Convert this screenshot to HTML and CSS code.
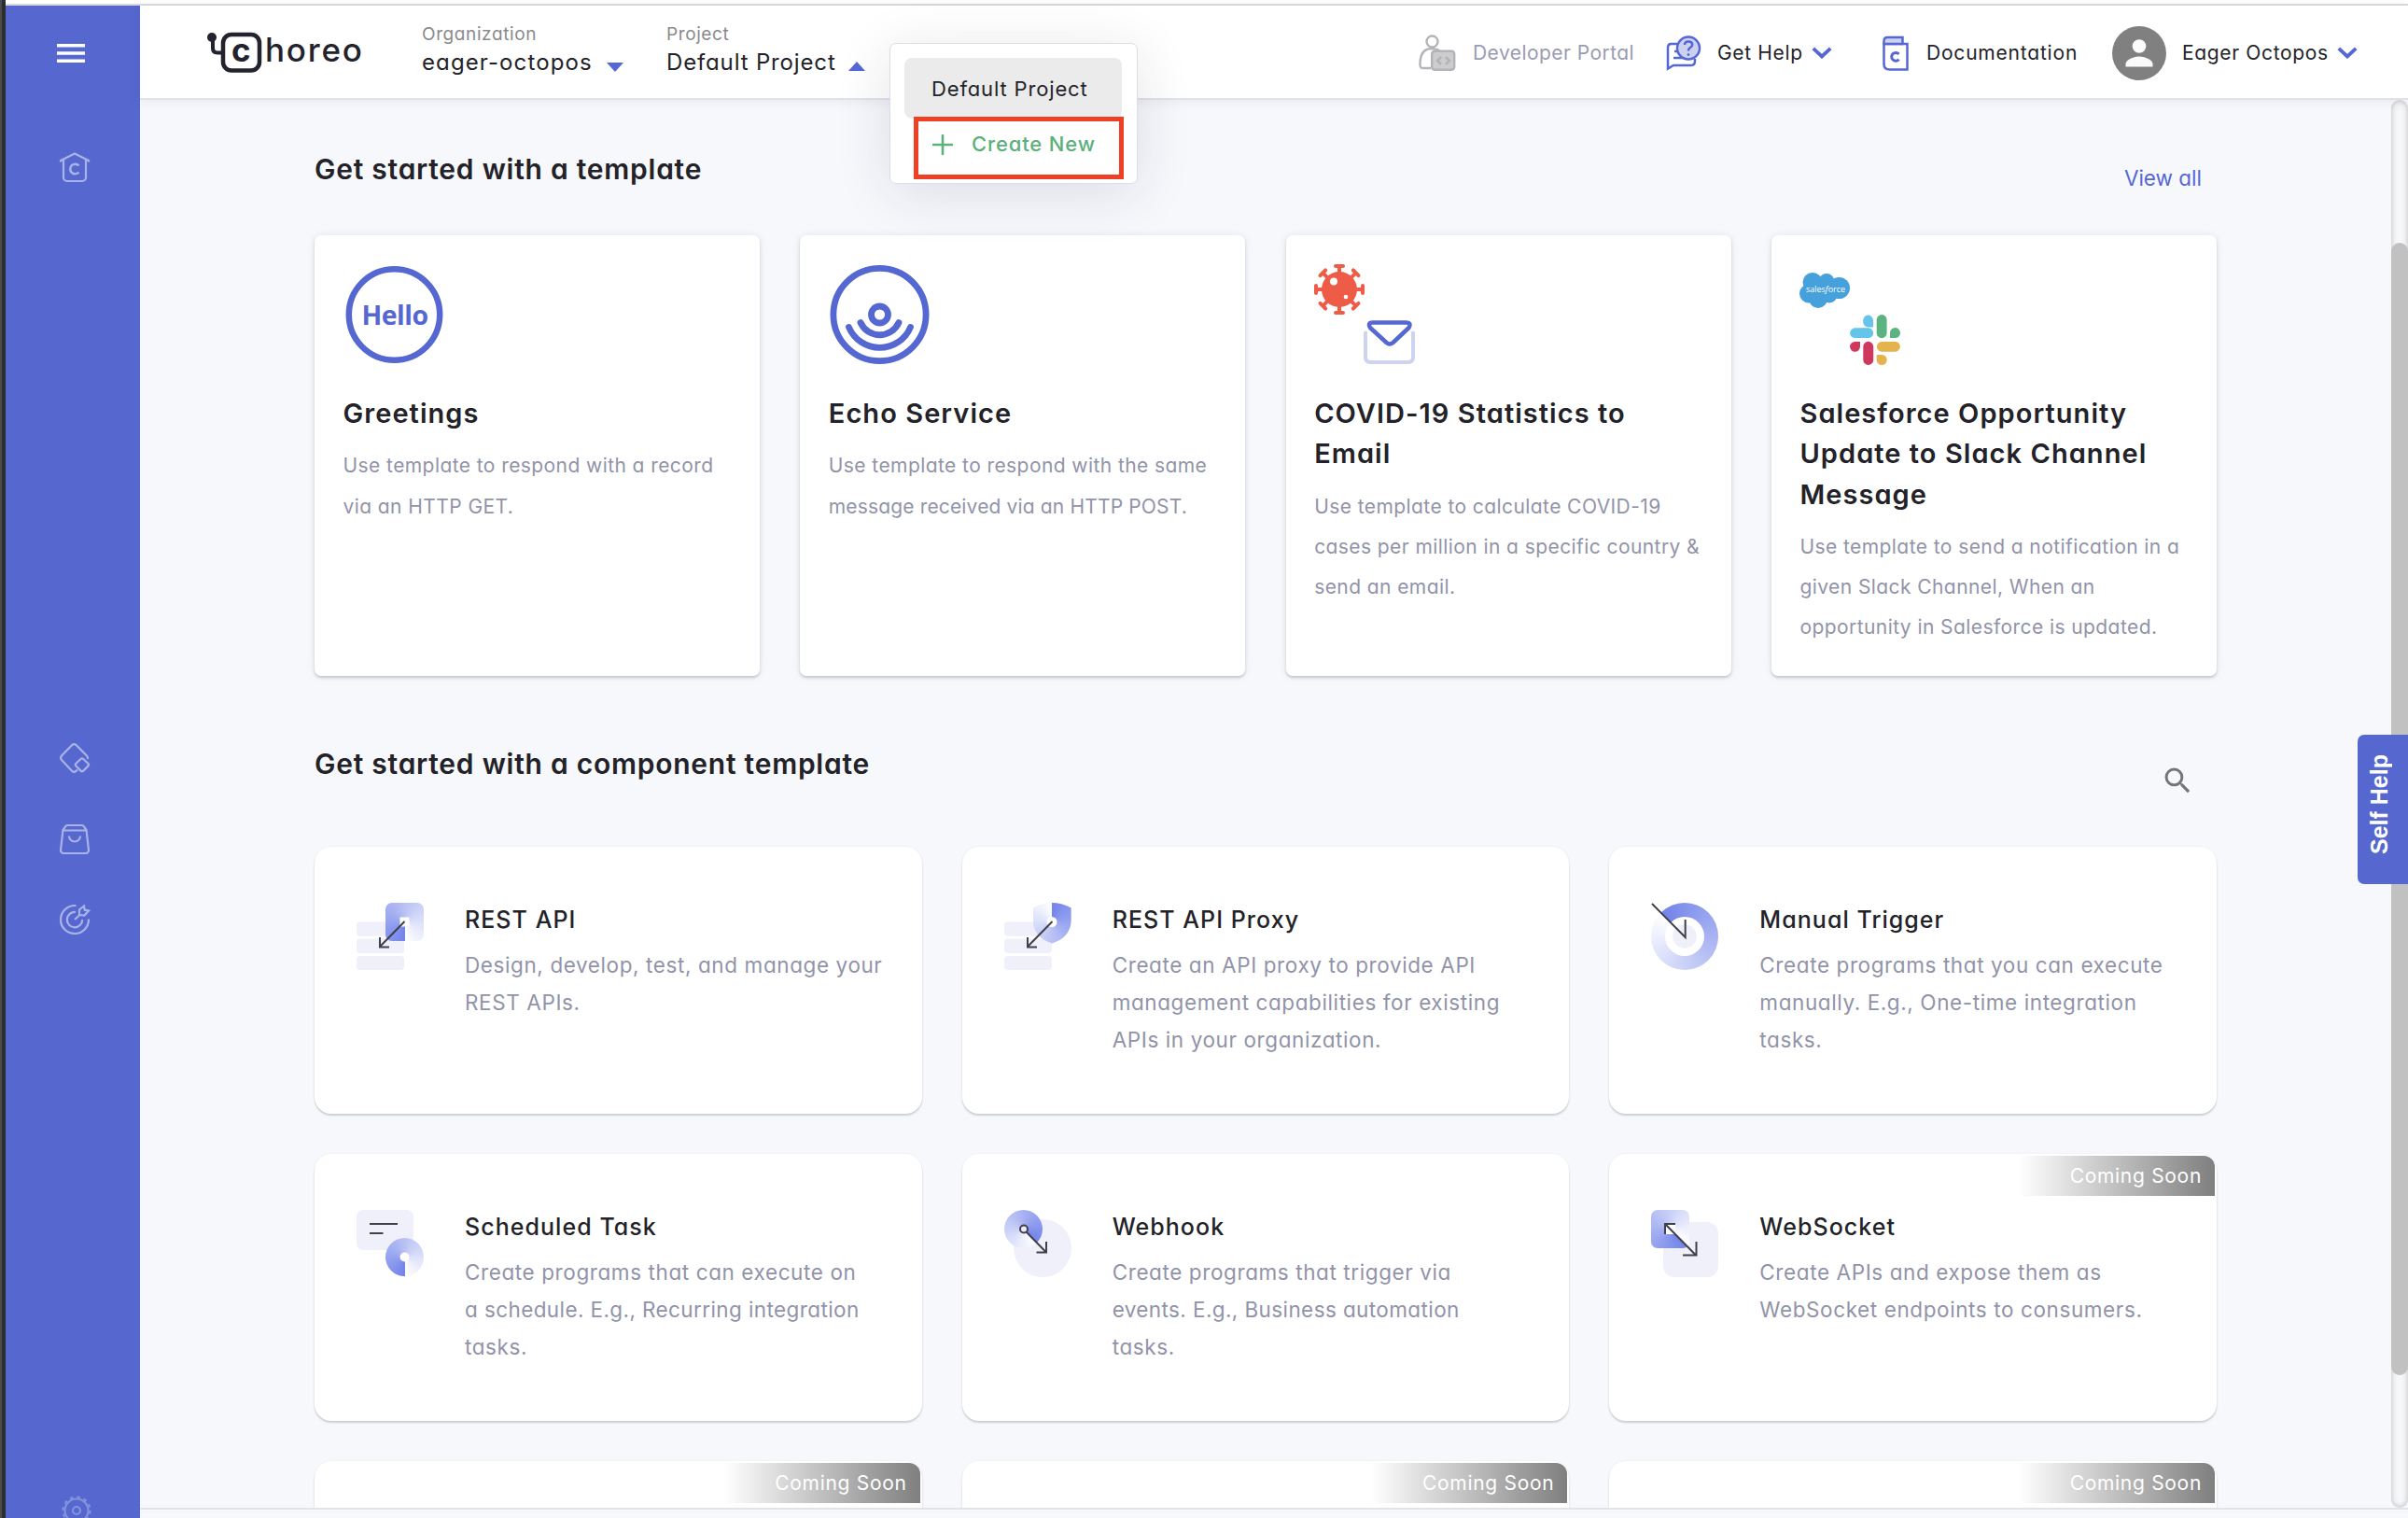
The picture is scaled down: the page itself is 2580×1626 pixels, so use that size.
FILE: index.html
```html
<!DOCTYPE html>
<html lang="en">
<head>
<meta charset="utf-8">
<title>Choreo Console</title>
<link rel="stylesheet" href="styles.css">
</head>
<body>
<div class="window">
  <div class="window-edge"></div>
  <div class="window-body">
    <div class="top-strip"></div>
    <div class="app">
      <nav class="sidebar">
        <svg class="menu-btn" width="30" height="20" viewBox="0 0 30 20" fill="#fff"><path d="M0 0h30v3.6H0zM0 8.2h30v3.6H0zM0 16.4h30V20H0z"/></svg>
        <svg class="side-icon side-home" viewBox="0 0 32 32"><path d="M1 10.5V9L16 1.500 31 9v1.500M4 8v19a4 4 0 0 0 4 4h16a4 4 0 0 0 4-4V8"/><path class="thick" d="M20.500 14.500a5.300 5.300 0 1 0 0 7"/></svg>
        <div class="side-group">
          <svg class="side-icon" viewBox="0 0 32 32"><path d="M19 28.500l-1.500 1.300a3.500 3.500 0 0 1-4.500 0L2 18a3.500 3.500 0 0 1 0-4.500L13 2.200a3.500 3.500 0 0 1 4.800 0L29 13.500c1 1 1.200 2 1 3.500"/><path d="M22.500 17l-5 4.800a2 2 0 0 0 0 2.800l5 5a2 2 0 0 0 2.800 0l5-5a2 2 0 0 0 0-2.800l-5-4.800a2 2 0 0 0-2.800 0z"/></svg>
          <svg class="side-icon" viewBox="0 0 32 32"><path d="M3.500 6L6 2.500A3 3 0 0 1 8.300 1h15.400A3 3 0 0 1 26 2.500L28.500 6 31 27.500A3.200 3.200 0 0 1 27.800 31H4.200A3.200 3.200 0 0 1 1 27.500zM3.500 6.500h25"/><path d="M10 12.500a6 6 0 0 0 12 0"/></svg>
          <svg class="side-icon" viewBox="0 0 32 32"><path d="M17.500 1.100A15 15 0 1 0 31 15.500"/><path d="M17 8a8.200 8.200 0 1 0 7.200 8"/><path d="M16 16l6-5.500M21 11V5.500L26 1.500l.8 4.200L31 6.500l-4.500 5z"/></svg>
        </div>
        <svg class="side-icon side-gear" viewBox="0 0 32 32"><circle cx="16" cy="16" r="12.500"/><circle cx="16" cy="16" r="4"/><circle cx="16" cy="16" r="14.500" stroke-dasharray="3.500 4.090"/></svg>
      </nav>

      <div class="main">
        <header class="header">
          <svg class="logo" width="170" height="46" viewBox="0 0 170 46">
            <circle cx="6" cy="7" r="5" fill="#23232e"/>
            <path d="M7 8v10.500q0 5 5 5h6" fill="none" stroke="#23232e" stroke-width="4"/>
            <rect x="18" y="4" width="39" height="38.500" rx="9" fill="#fff" stroke="#23232e" stroke-width="4.500"/>
            <text x="27" y="32.500" class="logo-c">c</text>
            <text x="63" y="32.500" class="logo-text">horeo</text>
          </svg>
          <div class="picker picker-org">
            <span class="picker-label">Organization</span>
            <span class="picker-value picker-value-org">eager-octopos <svg class="caret" width="18" height="10" viewBox="0 0 18 10"><path d="M0 0h18L9 10z" fill="#5567d5"/></svg></span>
          </div>
          <div class="picker picker-project">
            <span class="picker-label">Project</span>
            <span class="picker-value">Default Project <svg class="caret caret-up" width="18" height="10" viewBox="0 0 18 10"><path d="M0 10h18L9 0z" fill="#5567d5"/></svg></span>
            <div class="dropdown">
              <div class="dropdown-item selected">Default Project</div>
              <div class="dropdown-item create">
                <svg width="22" height="22" viewBox="0 0 22 22"><path d="M11 1v20M1 11h20" stroke="#5cb07c" stroke-width="2.600" stroke-linecap="round"/></svg>
                <span>Create New</span>
              </div>
            </div>
          </div>

          <div class="actions">
            <div class="action portal">
              <svg width="40" height="40" viewBox="0 0 40 40" fill="none" stroke="#b4b4b8" stroke-width="2.400"><circle cx="14.500" cy="7.500" r="6"/><path d="M13 36H4.500C2 36 1.500 35 1.500 32 1.500 22 5 15.500 13 15c4 0 7 .8 9.500 2.500"/><rect x="14.200" y="17.700" width="24" height="20" rx="3" fill="#cdcdd0"/><path d="M24 24l-4 4 4 4M29 24l4 4-4 4" stroke-width="2.600"/></svg>
              <span>Developer Portal</span>
            </div>
            <div class="action help">
              <svg width="38" height="40" viewBox="0 0 38 40" fill="none" stroke="#5567d5" stroke-width="2.500"><path d="M12 10H5.500Q2 10 2 14v22.500L8 33h19q4 0 4-5v-2M9 18h4M8 25h11"/><circle cx="24" cy="14.500" r="12" fill="#ccd1f2"/><path d="M20 11q0-3.500 4-3.500t4.200 3.200q0 2-2.200 3.300t-2 3.500" stroke-width="2.500"/><circle cx="24" cy="21.500" r="1" fill="#5567d5" stroke-width="1"/></svg>
              <span>Get Help</span>
              <svg class="chev" width="22" height="13" viewBox="0 0 22 13"><path d="M1.800 1.800L11 10.500l9.200-8.700" fill="none" stroke="#5567d5" stroke-width="3.800"/></svg>
            </div>
            <div class="action docs">
              <svg width="28" height="38" viewBox="0 0 28 38" fill="none" stroke="#5567d5" stroke-width="2.500"><path d="M1.500 9V30.500q0 6 6 6H26.500V9z"/><path d="M1.500 9V6q0-4 4-4h16v7z" fill="#ccd1f2"/><path d="M17.500 20a4.400 4.400 0 1 0 0 5.600" stroke-width="3"/></svg>
              <span>Documentation</span>
            </div>
            <div class="action user">
              <svg width="58" height="58" viewBox="0 0 58 58"><circle cx="29" cy="29" r="29" fill="#808080"/><circle cx="29" cy="21.500" r="7.300" fill="#fafafa"/><path d="M14.500 43.500v-3c0-5 9.500-8 14.500-8s14.500 3 14.500 8v3z" fill="#fafafa"/></svg>
              <span>Eager Octopos</span>
              <svg class="chev" width="22" height="13" viewBox="0 0 22 13"><path d="M1.800 1.800L11 10.500l9.200-8.700" fill="none" stroke="#5567d5" stroke-width="3.800"/></svg>
            </div>
          </div>
        </header>

        <div class="scroll-area">
          <main class="content">
            <div class="section-head">
              <h2>Get started with a template</h2>
              <a class="view-all">View all</a>
            </div>
            <div class="templates">
              <article class="template">
                <svg width="108" height="108" viewBox="0 0 108 108"><circle cx="54.500" cy="54" r="48.700" fill="none" stroke="#5567d0" stroke-width="6.500"/><text x="55" y="65" text-anchor="middle" class="hello">Hello</text></svg>
                <h3>Greetings</h3>
                <p>Use template to respond with a record<br>via an HTTP GET.</p>
              </article>
              <article class="template">
                <svg width="108" height="108" viewBox="0 0 108 108" fill="none" stroke="#5567d0" stroke-width="6.800" stroke-linecap="round"><circle cx="54.500" cy="54" r="49.600"/><circle cx="54.500" cy="54" r="9"/><path d="M34 62.500a22.500 22.500 0 0 0 41 0"/><path d="M21.500 67.500a35.800 35.800 0 0 0 66 0"/></svg>
                <h3>Echo Service</h3>
                <p>Use template to respond with the same<br><span class="tight">message received via an HTTP POST.</span></p>
              </article>
              <article class="template">
                <svg width="108" height="108" viewBox="0 0 108 108">
                  <g stroke="#ee5c48" stroke-width="4" stroke-linecap="round" fill="none"><path id="spike" d="M27 14V2M23 2h8"/><use href="#spike" transform="rotate(45 27 27)"/><use href="#spike" transform="rotate(90 27 27)"/><use href="#spike" transform="rotate(135 27 27)"/><use href="#spike" transform="rotate(180 27 27)"/><use href="#spike" transform="rotate(225 27 27)"/><use href="#spike" transform="rotate(270 27 27)"/><use href="#spike" transform="rotate(315 27 27)"/></g>
                  <circle cx="27" cy="27" r="19" fill="#ee5c48"/><circle cx="21" cy="18.500" r="4" fill="#fff"/><circle cx="34" cy="35" r="2.300" fill="#fff"/>
                  <path d="M56.500 74v26q0 5.500 5.500 5.500h40q5.500 0 5.500-5.500V74" transform="translate(-1.500 -.5)" fill="none" stroke="#ced3f0" stroke-width="4" stroke-linecap="round"/>
                  <path d="M62.500 62.500h36q6 0 3 5.500L84.500 84q-3.500 3-7 0L60 68q-3-5.500 2.500-5.500z" fill="none" stroke="#5567d0" stroke-width="4.500"/>
                </svg>
                <h3>COVID-19 Statistics to<br>Email</h3>
                <p>Use template to calculate COVID-19<br>cases per million in a specific country &amp;<br>send an email.</p>
              </article>
              <article class="template">
                <svg width="108" height="108" viewBox="0 0 108 108">
                  <g fill="#45a0dc"><circle cx="14" cy="19.500" r="10.500"/><circle cx="29" cy="18.500" r="8.500"/><circle cx="42.500" cy="25.500" r="11.500"/><circle cx="10" cy="31.500" r="10"/><circle cx="20" cy="37" r="10"/><circle cx="32" cy="33" r="8.500"/><path d="M8 18h34v18H8z"/></g>
                  <text x="28" y="30" text-anchor="middle" class="sf">sales<tspan font-style="italic">f</tspan>orce</text>
                  <g transform="translate(54 54)">
                    <path fill="#65c4ea" d="M25 13.500h-5.500A5.500 6.500 0 1 1 25 5.700zM5.500 14.300h14.300a5.400 5.400 0 0 1 0 10.800H5.500a5.400 5.400 0 0 1 0-10.800z"/>
                    <path fill="#5bb381" d="M28.700 5.500a5.400 5.400 0 0 1 10.900 0v14.200a5.400 5.400 0 0 1-10.900 0zM43 25.100v-5.400a5.500 5.500 0 1 1 5.500 5.400z"/>
                    <path fill="#e4b34d" d="M34.200 28.900h14.300a5.400 5.400 0 0 1 0 10.800H34.200a5.400 5.400 0 0 1 0-10.800zM28.700 43h5.500a5.500 5.500 0 1 1-5.500 5.500z"/>
                    <path fill="#cf375d" d="M14.300 34.300a5.400 5.400 0 0 1 10.900 0v14.200a5.400 5.400 0 0 1-10.900 0zM0 34.300a5.500 5.500 0 0 1 5.500-5.400H11v5.400a5.500 5.500 0 0 1-11 0z"/>
                  </g>
                </svg>
                <h3>Salesforce Opportunity<br>Update to Slack Channel<br>Message</h3>
                <p>Use template to send a notification in a<br>given Slack Channel, When an<br>opportunity in Salesforce is updated.</p>
              </article>
            </div>

            <div class="section-head section-head-components">
              <h2>Get started with a component template</h2>
              <svg class="search" width="36.500" height="36.500" viewBox="0 0 24 24"><path fill="#757575" d="M15.500 14h-.79l-.28-.27A6.471 6.471 0 0 0 16 9.500 6.500 6.500 0 1 0 9.500 16c1.610 0 3.090-.59 4.230-1.570l.27.28v.79l5 4.990L20.490 19l-4.990-5zm-6 0C7.010 14 5 11.990 5 9.500S7.010 5 9.500 5 14 7.010 14 9.500 11.990 14 9.500 14z"/></svg>
            </div>
            <div class="components">
              <article class="component">
                <div class="pic">
                  <svg viewBox="0 0 72 72" fill="#f0f0fb"><rect y="20.300" width="51" height="15.500" rx="4"/><rect y="38.600" width="51" height="15.500" rx="4"/><rect y="57" width="51" height="15" rx="4"/></svg>
                  <i class="conic conic-square"></i>
                  <svg viewBox="0 0 72 72"><rect x="46.500" y="15.500" width="10" height="10" fill="#fff"/><path class="arrow" d="M51.500 20L25 47M25 37v10.500h10"/></svg>
                </div>
                <div class="text"><h4>REST API</h4><p>Design, develop, test, and manage your<br>REST APIs.</p></div>
              </article>
              <article class="component">
                <div class="pic">
                  <svg viewBox="0 0 72 72" fill="#f0f0fb"><rect y="20.300" width="51" height="15.500" rx="4"/><rect y="38.600" width="51" height="15.500" rx="4"/><rect y="57" width="51" height="15" rx="4"/></svg>
                  <i class="conic conic-shield"></i>
                  <svg viewBox="0 0 72 72"><circle cx="51" cy="20.500" r="5.500" fill="#fff"/><path class="arrow" d="M51.500 20L25 47M25 37v10.500h10"/></svg>
                </div>
                <div class="text"><h4>REST API Proxy</h4><p>Create an API proxy to provide API<br>management capabilities for existing<br>APIs in your organization.</p></div>
              </article>
              <article class="component">
                <div class="pic">
                  <i class="conic conic-ring"></i>
                  <svg viewBox="0 0 72 72"><circle cx="36" cy="36" r="21" fill="#fff"/><circle cx="36" cy="36" r="12.800" fill="#f0f0fb"/><path class="arrow" d="M1 1l35.700 36V18"/></svg>
                </div>
                <div class="text"><h4>Manual Trigger</h4><p>Create programs that you can execute<br>manually. E.g., One-time integration<br>tasks.</p></div>
              </article>
              <article class="component">
                <div class="pic">
                  <svg viewBox="0 0 72 72"><rect width="61" height="43" rx="7" fill="#f0f0fb"/><path class="arrow" d="M14 15h30M14 25h14.500"/></svg>
                  <i class="conic conic-clock"></i>
                  <svg viewBox="0 0 72 72"><circle cx="51.500" cy="50.500" r="5" fill="#fff"/></svg>
                </div>
                <div class="text"><h4>Scheduled Task</h4><p>Create programs that can execute on<br><span class="tight">a schedule. E.g., Recurring integration</span><br>tasks.</p></div>
              </article>
              <article class="component">
                <div class="pic">
                  <svg viewBox="0 0 72 72"><circle cx="41" cy="41" r="31" fill="#f0f0fb"/></svg>
                  <i class="conic conic-hook"></i>
                  <svg viewBox="0 0 72 72"><circle cx="21" cy="20.500" r="4" fill="#e9ebfa" stroke="#40404b" stroke-width="2"/><path class="arrow" d="M23.500 23.500L45 45.500M45 34v11.500H34.500"/></svg>
                </div>
                <div class="text"><h4>Webhook</h4><p>Create programs that trigger via<br><span class="tight">events. E.g., Business automation</span><br>tasks.</p></div>
              </article>
              <article class="component">
                <div class="pic">
                  <svg viewBox="0 0 72 72"><rect x="13" y="13" width="59" height="59" rx="12" fill="#f0f0fb"/></svg>
                  <i class="conic conic-socket"></i>
                  <svg viewBox="0 0 72 72"><rect x="16" y="16" width="10" height="10" fill="#fff"/><path class="arrow" d="M15 15l33 33.500M15 26V15h11M48.500 34v14.500H34"/></svg>
                </div>
                <div class="text"><h4>WebSocket</h4><p>Create APIs and expose them as<br>WebSocket endpoints to consumers.</p></div>
                <span class="soon">Coming Soon</span>
              </article>
              <article class="component"><span class="soon">Coming Soon</span></article>
              <article class="component"><span class="soon">Coming Soon</span></article>
              <article class="component"><span class="soon">Coming Soon</span></article>
            </div>
          </main>
          <div class="scrollbar"><div class="thumb"></div></div>
        </div>
      </div>
    </div>
  </div>
  <div class="self-help"><span>Self Help</span></div>
</div>
</body>
</html>
```
FILE: styles.css
```css
* { box-sizing: border-box; }

body {
  margin: 0;
  font-family: Inter, "Liberation Sans", sans-serif;
  font-feature-settings: "cv11";
  color: #222228;
  background: #f7f8fc;
  white-space: nowrap;
}

h2, h3, h4, p { margin: 0; }

.window {
  position: relative;
  display: flex;
  width: 2580px;
  height: 1626px;
  overflow: hidden;
}

.window-edge {
  width: 6px;
  background: linear-gradient(to right, #4a4b4b 2px, #2c2d2d 2px);
}

.window-body {
  flex: 1;
  display: flex;
  flex-direction: column;
}

.top-strip {
  height: 6px;
  background: #fff;
  border-bottom: 2px solid #dadada;
}

.app { flex: 1; display: flex; min-height: 0; }

/* Sidebar */
.sidebar {
  width: 144px;
  display: flex;
  flex-direction: column;
  align-items: flex-start;
  padding-top: 41px;
  background: #5668cf;
}

.menu-btn { margin-left: 55px; flex: none; }

.side-icon {
  flex: none;
  width: 32px;
  height: 32px;
  margin-left: 58px;
  fill: none;
  stroke: #aab3e7;
  stroke-width: 2.2;
  overflow: visible;
}

.side-icon .thick { stroke-width: 2.6; }
.side-home { margin-top: 96px; }

.side-group {
  display: flex;
  flex-direction: column;
  gap: 54.5px;
  margin-top: 601px;
}

.side-gear { margin: 601px 0 0 60px; stroke: #8592dd; }

/* Header */
.main { flex: 1; display: flex; flex-direction: column; }

.header {
  position: relative;
  z-index: 2;
  display: flex;
  align-items: flex-start;
  height: 101px;
  padding-left: 71px;
  background: #fff;
  border-bottom: 2px solid #e0e1ea;
  box-shadow: 0 2px 12px rgba(60, 60, 90, .08);
}

.logo { margin-top: 27px; }
.logo-text, .logo-c { fill: #23232e; font-size: 35px; font-weight: 500; }
.logo-text { letter-spacing: 1.8px; }
.logo-c { font-weight: 700; }

.picker {
  position: relative;
  display: flex;
  flex-direction: column;
  margin-top: 15px;
}

.picker-org { width: 262px; margin-left: 61px; }
.picker-label { font-size: 19px; line-height: 31px; letter-spacing: .6px; color: #8a8a8d; }
.picker-value { display: flex; align-items: center; font-size: 24px; line-height: 30px; letter-spacing: .85px; }
.picker-value-org { letter-spacing: 1.1px; }
.caret { margin: 9px 0 0 15px; }
.caret-up { margin: 7px 0 0 13px; }

.dropdown {
  position: absolute;
  left: 239px;
  top: 25px;
  width: 266px;
  height: 151px;
  padding: 15px;
  background: #fff;
  border: 1px solid #dcdde6;
  border-radius: 7px;
  box-shadow: 0 10px 60px rgba(30, 30, 60, .12);
}

.dropdown-item { font-size: 22px; letter-spacing: .85px; }

.selected {
  width: 233px;
  height: 65px;
  line-height: 67px;
  padding-left: 29px;
  border-radius: 8px;
  background: #ebebeb;
}

.create {
  position: relative;
  display: flex;
  gap: 20px;
  width: 225px;
  height: 67px;
  margin: -2px 0 0 10px;
  padding: 14px 0 0 15px;
  color: #5cb07c;
  font-weight: 500;
  border: 5px solid #ee4024;
}
.create span { line-height: 20px; }

.actions {
  display: grid;
  grid-template-columns: 265px 232px 246px 265px;
  height: 101px;
  margin-left: auto;
  padding-right: 52px;
}
.action { display: flex; align-items: center; gap: 17px; font-size: 21px; letter-spacing: .65px; }
.portal { gap: 18px; letter-spacing: .45px; color: #9a9bb0; }
.docs { gap: 19px; letter-spacing: .8px; }
.chev { margin-left: -8px; }

/* Content */
.scroll-area {
  flex: none;
  display: flex;
  height: 1510px;
  overflow: hidden;
  border-bottom: 2px solid #e2e4ec;
}

.content { width: 2412px; padding: 0 187px; }

.section-head {
  display: flex;
  justify-content: space-between;
  align-items: flex-start;
  height: 145px;
  padding-top: 54px;
}

.section-head h2 { font-size: 30px; font-weight: 600; line-height: 40px; letter-spacing: .75px; }
.view-all { margin: 10px 16px 0 0; font-size: 22.5px; line-height: 40px; color: #5567d5; }
.section-head-components { height: 183px; padding-top: 74px; }
.search { margin: 20px 24px 0 0; }

.templates {
  display: grid;
  grid-template-columns: repeat(4, minmax(0, 1fr));
  gap: 43.3px;
}

.template {
  height: 472px;
  padding: 31px 30px;
  background: #fff;
  border-radius: 7px;
  box-shadow: 0 2px 3px rgba(40, 40, 60, .22), 0 0 10px rgba(40, 40, 60, .08);
}

.template svg { display: block; margin-left: .5px; }
.hello { font-family: "Open Sans", sans-serif; font-size: 28.5px; font-weight: 700; letter-spacing: -.5px; fill: #5567d0; }
.sf { font-family: "Open Sans", sans-serif; font-size: 9px; fill: #fff; }
.template h3 { margin-top: 30px; padding-left: .5px; font-size: 29px; font-weight: 600; line-height: 43.3px; letter-spacing: 1.05px; }
.template p { margin-top: 13px; padding-left: .5px; font-size: 21px; line-height: 43.3px; letter-spacing: .42px; color: #9193a8; }
.template .tight { letter-spacing: .15px; }

.components {
  display: grid;
  grid-template-columns: repeat(3, minmax(0, 1fr));
  gap: 43px;
}

.component {
  position: relative;
  display: flex;
  gap: 44px;
  height: 286px;
  padding: 58px 45px;
  background: #fff;
  border-radius: 18px;
  box-shadow: 0 2px 2px rgba(40, 50, 70, .2), 0 0 2px rgba(40, 50, 70, .08);
}

.component h4 { font-size: 25px; font-weight: 500; line-height: 40px; letter-spacing: 1.05px; }
.component p { margin-top: 9px; font-size: 22.5px; line-height: 40px; letter-spacing: .6px; color: #9193a8; }
.component .tight { letter-spacing: .4px; }

.pic { position: relative; flex: none; width: 72px; height: 72px; margin-top: 2px; }
.pic svg { position: absolute; inset: 0; overflow: visible; }
.arrow { fill: none; stroke: #40404b; stroke-width: 2; }

.conic { position: absolute; width: 41px; height: 41px; }
.conic-square { right: 0; top: 0; border-radius: 7px; background: conic-gradient(from 180deg, #7384ea, #fff); }
.conic-shield {
  right: 0;
  top: 0;
  height: 44px;
  background: conic-gradient(from 0deg at 20.5px 20px, #7384ea, #fff);
  clip-path: path("M20.5 0C27 0 34 1.5 41 5.5V19C41 31 33 39.5 20.5 43.5C8 39.5 0 31 0 19V5.5C7 1.5 14 0 20.5 0Z");
}
.conic-ring { inset: 0; width: 72px; height: 72px; border-radius: 50%; background: conic-gradient(from 315deg, #7384ea, #fff); }
.conic-clock { right: 0; top: 30px; border-radius: 50%; background: conic-gradient(from 180deg, #7384ea, #fff); }
.conic-hook { left: 0; top: 0; border-radius: 50%; background: conic-gradient(from 135deg, #fff, #7384ea); }
.conic-socket { left: 0; top: 0; border-radius: 7px; background: conic-gradient(from 135deg, #7384ea, #fff); }

.soon {
  position: absolute;
  top: 2px;
  right: 2px;
  width: 210px;
  height: 43px;
  padding-right: 14px;
  border-top-right-radius: 12px;
  background: linear-gradient(to right, rgba(127, 127, 127, 0), #7f7f7f);
  color: #fff;
  font-size: 21px;
  line-height: 43px;
  letter-spacing: .7px;
  text-align: right;
}

.scrollbar {
  width: 18px;
  padding-top: 153px;
  border-radius: 9px;
  background: #f6f7f9;
  box-shadow: inset 0 0 6px rgba(0, 0, 0, .25);
}

.thumb { height: 1213px; border-radius: 9px; background: #c1c1c1; }

.self-help {
  position: absolute;
  right: 0;
  top: 787px;
  z-index: 3;
  display: flex;
  align-items: flex-start;
  width: 54px;
  height: 160px;
  padding: 21px 0 0 8px;
  border-radius: 7px 0 0 7px;
  background: #5668cf;
}

.self-help span {
  writing-mode: vertical-rl;
  transform: rotate(180deg);
  font-family: "Liberation Sans", sans-serif;
  font-size: 25px;
  font-weight: 700;
  line-height: 30px;
  height: 107px;
  color: #fff;
}
```
